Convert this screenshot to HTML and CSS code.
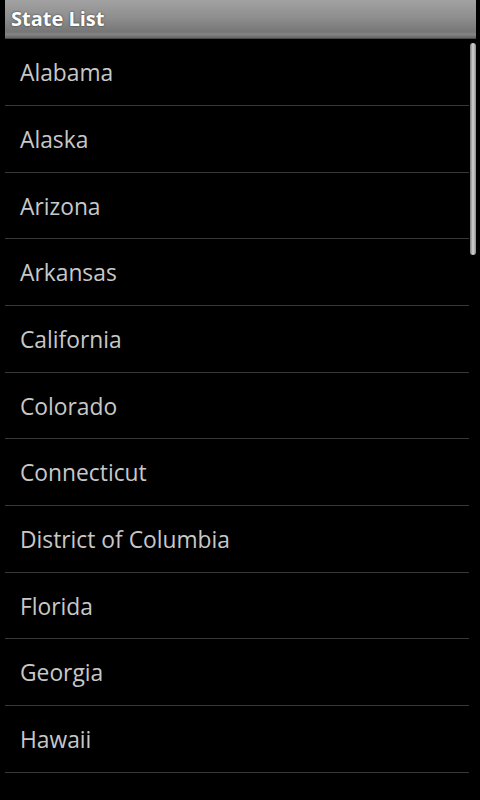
FILE: index.html
```html
<!DOCTYPE html>
<html>
<head>
<meta charset="utf-8">
<link rel="stylesheet" href="styles.css">
</head>
<body>
<div class="screen">
  <div class="titlebar"><span class="title">State List</span></div>
  <div class="listwrap">
    <ul class="list">
      <li class="row">Alabama</li>
      <li class="row">Alaska</li>
      <li class="row">Arizona</li>
      <li class="row">Arkansas</li>
      <li class="row">California</li>
      <li class="row">Colorado</li>
      <li class="row">Connecticut</li>
      <li class="row">District of Columbia</li>
      <li class="row">Florida</li>
      <li class="row">Georgia</li>
      <li class="row">Hawaii</li>
    </ul>
    <div class="scrollbar"></div>
  </div>
</div>
</body>
</html>
```
FILE: styles.css
```css
html, body {
  margin: 0;
  padding: 0;
  background: #000;
  height: 800px;
  overflow: hidden;
}
.screen {
  width: 480px;
  height: 800px;
  background: #000;
  display: flex;
  flex-direction: column;
  font-family: "Open Sans", "Noto Sans", sans-serif;
}
.titlebar {
  height: 39px;
  margin: 0 4px 0 5px;
  background: linear-gradient(to bottom, #a2a2a2 0%, #8e8e8e 45%, #767676 82%, #858585 88%, #6a6a6a 96%, #3a3a3a 100%);
  display: flex;
  align-items: center;
  padding-left: 6px;
  box-sizing: border-box;
}
.title {
  color: #fff;
  font-weight: bold;
  font-size: 20px;
  text-shadow: 0 0 2px rgba(0,0,0,0.7);
  position: relative;
  top: -1px;
}
.listwrap {
  position: relative;
  flex: 1;
  overflow: hidden;
}
.list {
  list-style: none;
  margin: 0;
  padding: 0.5px 11px 0 5px;
}
.row {
  box-sizing: border-box;
  height: calc(200px / 3);
  border-bottom: 1px solid #383838;
  display: flex;
  align-items: center;
  padding-left: 15px;
  padding-top: 1px;
  color: #c8c8c8;
  font-size: 22.8px;
}
.scrollbar {
  position: absolute;
  left: 470px;
  top: 4px;
  width: 6px;
  height: 212px;
  border-radius: 3px;
  background: linear-gradient(to right, #7a7a7a, #d4d4d4 50%, #8a8a8a);
}
```
